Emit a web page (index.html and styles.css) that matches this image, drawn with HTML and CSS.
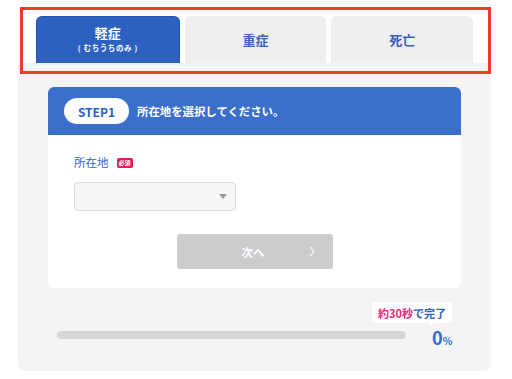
FILE: index.html
```html
<!DOCTYPE html>
<html lang="ja">
<head>
<meta charset="utf-8">
<title>STEP1</title>
<link rel="stylesheet" href="styles.css">
</head>
<body>
<div class="page">
  <nav class="tabs">
    <button class="tab tab-active">
      <span class="tab-title">軽症</span>
      <span class="tab-sub">( むちうちのみ )</span>
    </button>
    <button class="tab"><span class="tab-title">重症</span></button>
    <button class="tab"><span class="tab-title">死亡</span></button>
  </nav>
  <div class="highlight"></div>
  <section class="panel">
    <div class="card">
      <div class="card-head">
        <span class="step">STEP1</span>
        <span class="head-text">所在地を選択してください。</span>
      </div>
      <div class="card-body">
        <div class="field-label">
          <span>所在地</span>
          <span class="req">必須</span>
        </div>
        <div class="select">
          <svg class="caret" width="8" height="5" viewBox="0 0 8 5"><path d="M0 0H8L4 5Z" fill="#9a9a9a"/></svg>
        </div>
        <div class="actions">
          <button class="next">
            <span>次へ</span>
            <svg class="chev" width="6" height="11" viewBox="0 0 6 11"><path d="M1 0.5L5 5.5L1 10.5" fill="none" stroke="#fff" stroke-width="1.1"/></svg>
          </button>
        </div>
      </div>
    </div>
    <div class="progress">
      <div class="bubble"><span class="pink">約30秒</span>で完了</div>
      <div class="progress-row">
        <div class="bar"></div>
        <div class="pct"><span class="pct-num">0</span><span class="pct-sign">%</span></div>
      </div>
    </div>
  </section>
</div>
</body>
</html>
```
FILE: styles.css
```css
html, body {
  margin: 0;
  padding: 0;
  background: #ffffff;
}
body {
  font-family: "Noto Sans CJK JP", "Noto Sans", sans-serif;
}
.page {
  position: relative;
  width: 473px;
  margin-left: 18px;
}
.tabs {
  display: flex;
  gap: 5px;
  padding: 16px 18px 0 18px;
  height: 47px;
}
.tab {
  flex: 1;
  border: none;
  margin: 0;
  padding: 0;
  border-radius: 6px 6px 0 0;
  background: #efefef;
  color: #3a5fc0;
  display: flex;
  flex-direction: column;
  align-items: center;
  justify-content: center;
  font-family: inherit;
}
.tab-active {
  background: #2c61c2;
  border: 1px solid #1f52b3;
  border-bottom: none;
  color: #ffffff;
  padding-bottom: 2px;
}
.tab-title {
  font-size: 13px;
  font-weight: 700;
  line-height: 14px;
}
.tab-sub {
  font-size: 7.5px;
  font-weight: 700;
  line-height: 9px;
  margin-top: 3px;
  letter-spacing: 0.6px;
  white-space: pre;
}
.highlight {
  position: absolute;
  left: 2px;
  top: 7px;
  width: 465px;
  height: 61px;
  border: 3px solid #ef3b2d;
  pointer-events: none;
}
.panel {
  background: #f4f4f4;
  border-radius: 0 0 8px 8px;
  padding: 24px 30px 28px 30px;
}
.card {
  background: #ffffff;
  border-radius: 6px;
  overflow: hidden;
}
.card-head {
  height: 48px;
  background: #3a70cc;
  display: flex;
  align-items: center;
  gap: 8px;
  padding-left: 16px;
}
.step {
  width: 65px;
  height: 26px;
  border-radius: 13px;
  background: #ffffff;
  color: #2b5fbf;
  font-size: 12px;
  font-weight: 700;
  display: flex;
  align-items: center;
  justify-content: center;
}
.head-text {
  color: #ffffff;
  font-size: 11.4px;
  font-weight: 700;
}
.card-body {
  padding: 20px 26px 19px 26px;
}
.field-label {
  height: 14px;
  display: flex;
  align-items: center;
  gap: 8px;
  color: #2b5fbf;
  font-size: 11.5px;
}
.req {
  width: 16px;
  height: 10px;
  border-radius: 2px;
  background: #e5195a;
  color: #ffffff;
  font-size: 6px;
  font-weight: 700;
  display: flex;
  align-items: center;
  justify-content: center;
  line-height: 1;
  margin-top: 1px;
}
.select {
  margin-top: 13px;
  width: 162px;
  height: 29px;
  box-sizing: border-box;
  background: #f7f7f7;
  border: 1px solid #dcdcdc;
  border-radius: 4px;
  display: flex;
  align-items: center;
  justify-content: flex-end;
  padding-right: 8px;
}
.actions {
  margin-top: 23px;
  display: flex;
  justify-content: center;
}
.next {
  width: 156px;
  height: 35px;
  border: none;
  border-radius: 3px;
  background: #cccccc;
  color: #ffffff;
  font-family: inherit;
  font-size: 11.5px;
  font-weight: 700;
  display: flex;
  align-items: center;
  padding: 0 18px 0 65px;
  justify-content: space-between;
}
.progress {
  margin: 14px 9px 0 9px;
  display: flex;
  flex-direction: column;
}
.bubble {
  align-self: flex-end;
  position: relative;
  height: 21px;
  padding: 0 6px;
  background: #ffffff;
  border-radius: 3px;
  color: #2b5fbf;
  font-size: 11px;
  font-weight: 700;
  display: flex;
  align-items: center;
  margin-bottom: 4px;
}
.bubble::after {
  content: "";
  position: absolute;
  left: 56px;
  bottom: -4px;
  border-left: 3px solid transparent;
  border-right: 3px solid transparent;
  border-top: 4px solid #ffffff;
}
.pink {
  color: #e8287a;
}
.progress-row {
  height: 16px;
  display: flex;
  align-items: center;
  gap: 26px;
}
.bar {
  flex: 1;
  height: 8px;
  border-radius: 4px;
  background: #d6d6d6;
}
.pct {
  width: 20px;
  display: flex;
  align-items: baseline;
  color: #2e6bd0;
  font-weight: 700;
  line-height: 1;
  margin-top: 4px;
}
.pct-num {
  font-size: 18px;
}
.pct-sign {
  font-size: 10px;
}
```
